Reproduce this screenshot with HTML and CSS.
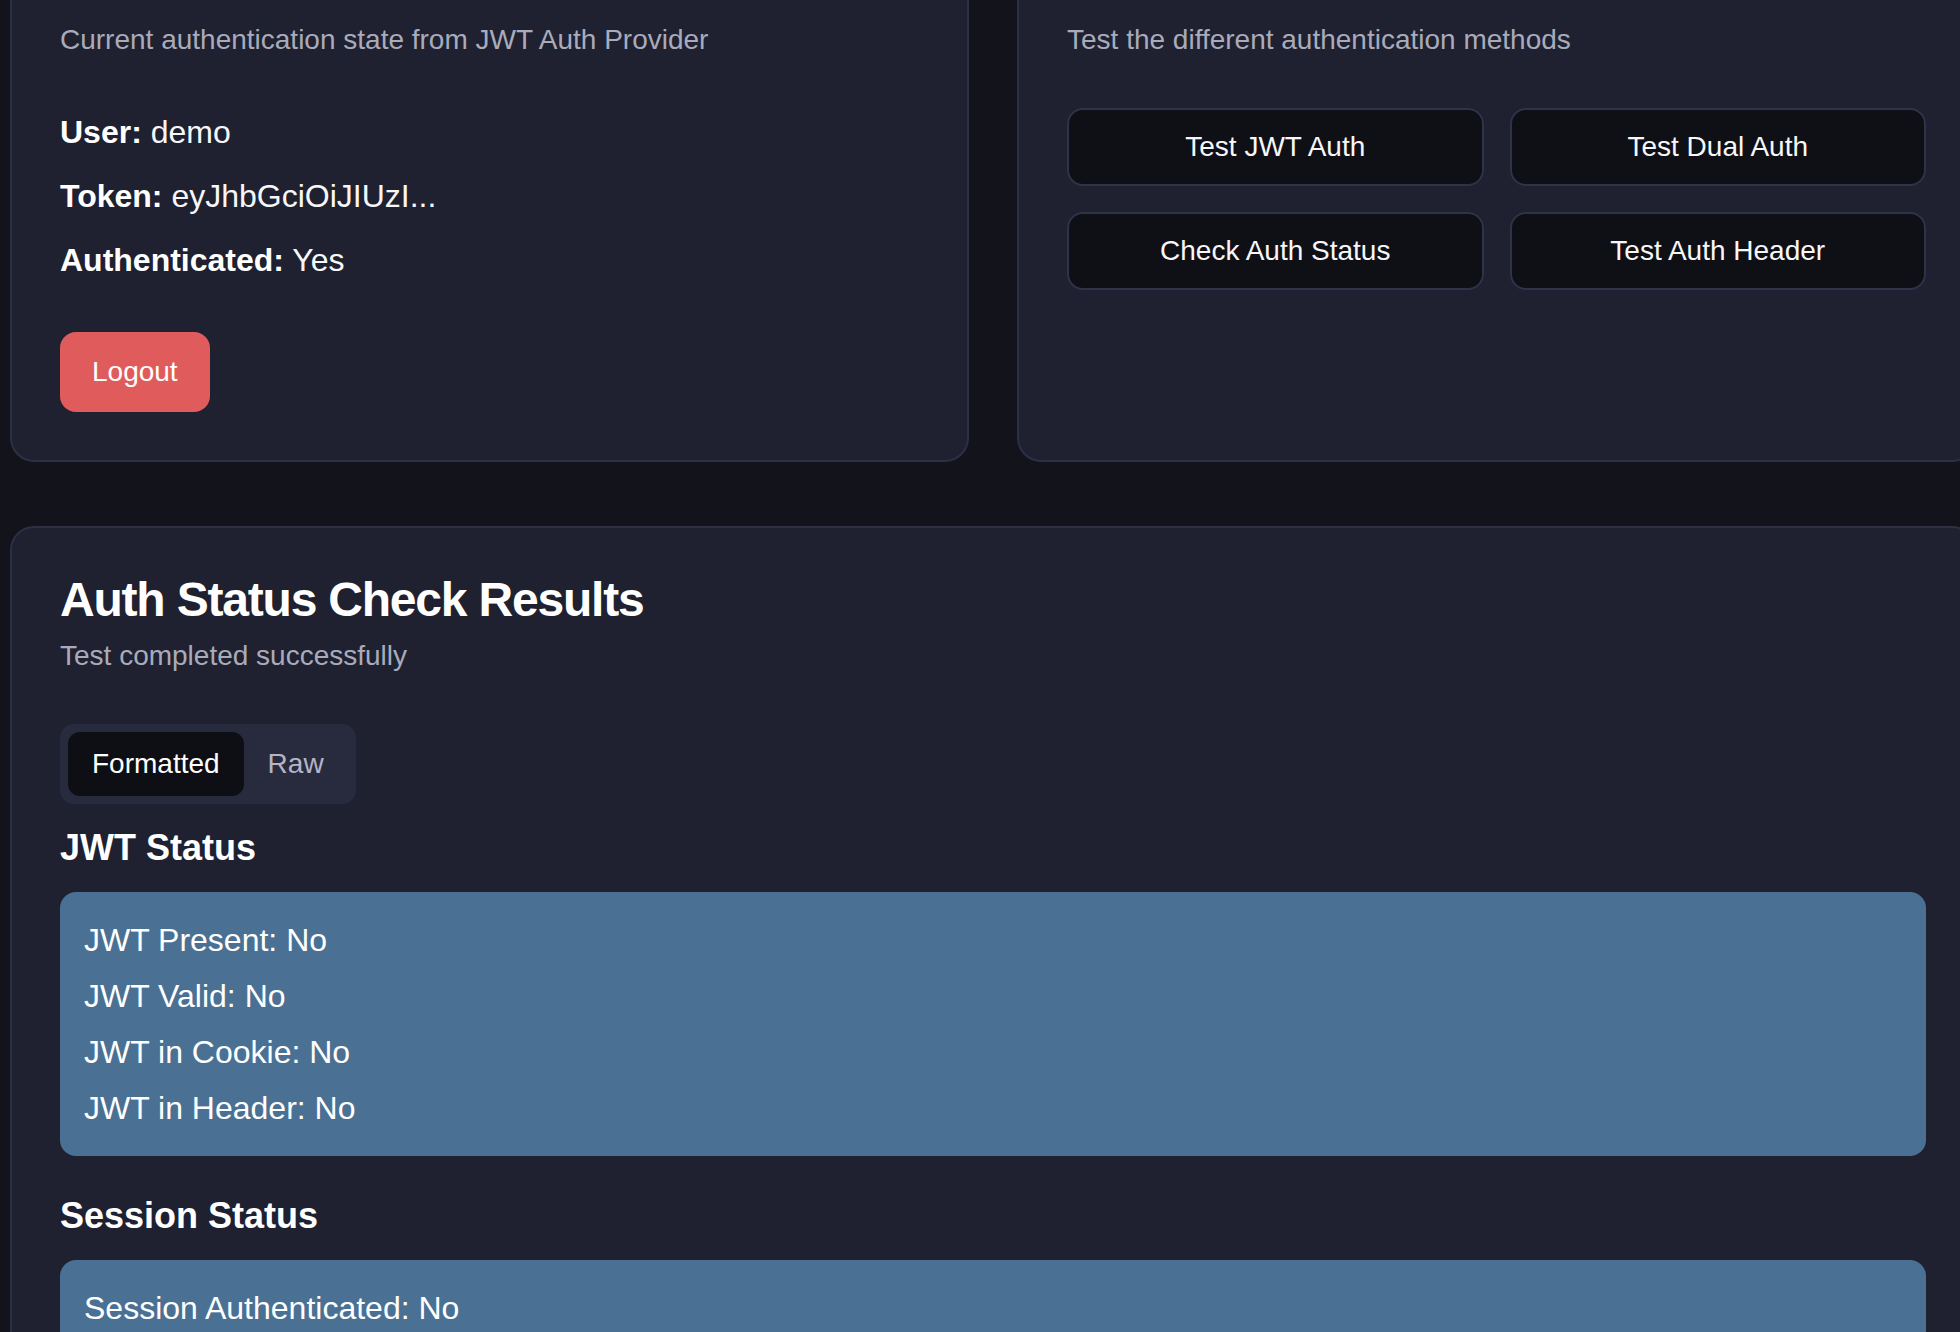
FILE: index.html
```html
<!DOCTYPE html>
<html lang="en">
<head>
<meta charset="utf-8">
<title>JWT Auth Test</title>
<link rel="stylesheet" href="styles.css">
</head>
<body>
<div class="page">
  <div class="top-grid">
    <section class="card">
      <div class="card-header">
        <h2 class="card-title">Authentication Status</h2>
        <p class="card-desc">Current authentication state from JWT Auth Provider</p>
      </div>
      <div class="card-content">
        <div class="info">
          <p><strong>User:</strong> demo</p>
          <p><strong>Token:</strong> eyJhbGciOiJIUzI...</p>
          <p><strong>Authenticated:</strong> Yes</p>
        </div>
        <button class="btn btn-danger">Logout</button>
      </div>
    </section>
    <section class="card">
      <div class="card-header">
        <h2 class="card-title">Authentication Tests</h2>
        <p class="card-desc">Test the different authentication methods</p>
      </div>
      <div class="card-content">
        <div class="test-grid">
          <button class="btn btn-outline">Test JWT Auth</button>
          <button class="btn btn-outline">Test Dual Auth</button>
          <button class="btn btn-outline">Check Auth Status</button>
          <button class="btn btn-outline">Test Auth Header</button>
        </div>
      </div>
    </section>
  </div>

  <section class="card results">
    <div class="card-header">
      <h2 class="card-title">Auth Status Check Results</h2>
      <p class="card-desc">Test completed successfully</p>
    </div>
    <div class="card-content">
      <div class="tabs-list">
        <button class="tab active">Formatted</button>
        <button class="tab">Raw</button>
      </div>
      <h3 class="section-title first">JWT Status</h3>
      <div class="status-box">
        <p>JWT Present: No</p>
        <p>JWT Valid: No</p>
        <p>JWT in Cookie: No</p>
        <p>JWT in Header: No</p>
      </div>
      <h3 class="section-title">Session Status</h3>
      <div class="status-box">
        <p>Session Authenticated: No</p>
        <p>Session User: None</p>
      </div>
    </div>
  </section>
</div>
</body>
</html>
```

FILE: styles.css
```css
html, body {
  margin: 0;
  padding: 0;
  overflow: hidden;
  background: #12131b;
}

body {
  font-family: "Liberation Sans", Arial, Helvetica, sans-serif;
  color: #f7f7f9;
  width: 1960px;
  height: 1332px;
}

.page {
  margin-top: -90px;
  margin-left: 10px;
  width: 1966px;
  display: flex;
  flex-direction: column;
  gap: 64px;
}

.top-grid {
  display: grid;
  grid-template-columns: 959px 959px;
  column-gap: 48px;
}

.card {
  background: #1f2130;
  border: 2px solid #2d2f45;
  border-radius: 24px;
  box-sizing: border-box;
}

.card-header {
  padding: 48px 48px 48px;
  display: flex;
  flex-direction: column;
  gap: 12px;
}

.card-title {
  margin: 0;
  font-size: 48px;
  line-height: 48px;
  font-weight: 700;
  letter-spacing: -1.2px;
  color: #ffffff;
}

.card-desc {
  margin: 0;
  font-size: 28px;
  line-height: 40px;
  color: #a9abbb;
}

.card-content {
  padding: 0 48px 48px;
}

.info {
  display: flex;
  flex-direction: column;
  gap: 16px;
}

.info p {
  margin: 0;
  font-size: 32px;
  line-height: 48px;
  color: #f7f7f9;
}

.info strong {
  font-weight: 700;
  color: #ffffff;
}

.btn {
  font-family: inherit;
  font-size: 28px;
  line-height: 40px;
  cursor: pointer;
  box-sizing: border-box;
}

.btn-danger {
  margin-top: 48px;
  height: 80px;
  padding: 0 32px;
  border: none;
  border-radius: 16px;
  background: #e05c5c;
  color: #ffffff;
}

.test-grid {
  display: grid;
  grid-template-columns: 1fr 1fr;
  gap: 26px;
}

.btn-outline {
  height: 78px;
  border: 2px solid #30324a;
  border-radius: 16px;
  background: #0f1016;
  color: #f7f7f9;
}

.tabs-list {
  display: inline-flex;
  height: 80px;
  padding: 8px;
  box-sizing: border-box;
  background: #282a3e;
  border-radius: 14px;
}

.tab {
  height: 64px;
  padding: 0 24px;
  border: none;
  border-radius: 12px;
  background: transparent;
  color: #b3b5c5;
  font-family: inherit;
  font-size: 28px;
  line-height: 40px;
}

.tab.active {
  background: #0e0f14;
  color: #ffffff;
}

.section-title {
  margin: 32px 0 16px;
  font-size: 36px;
  line-height: 56px;
  font-weight: 700;
  color: #ffffff;
}

.section-title.first {
  margin-top: 16px;
}

.status-box {
  background: #4a7194;
  border-radius: 16px;
  padding: 24px;
  display: flex;
  flex-direction: column;
  gap: 8px;
}

.status-box p {
  margin: 0;
  font-size: 32px;
  line-height: 48px;
  color: #ffffff;
}
```
